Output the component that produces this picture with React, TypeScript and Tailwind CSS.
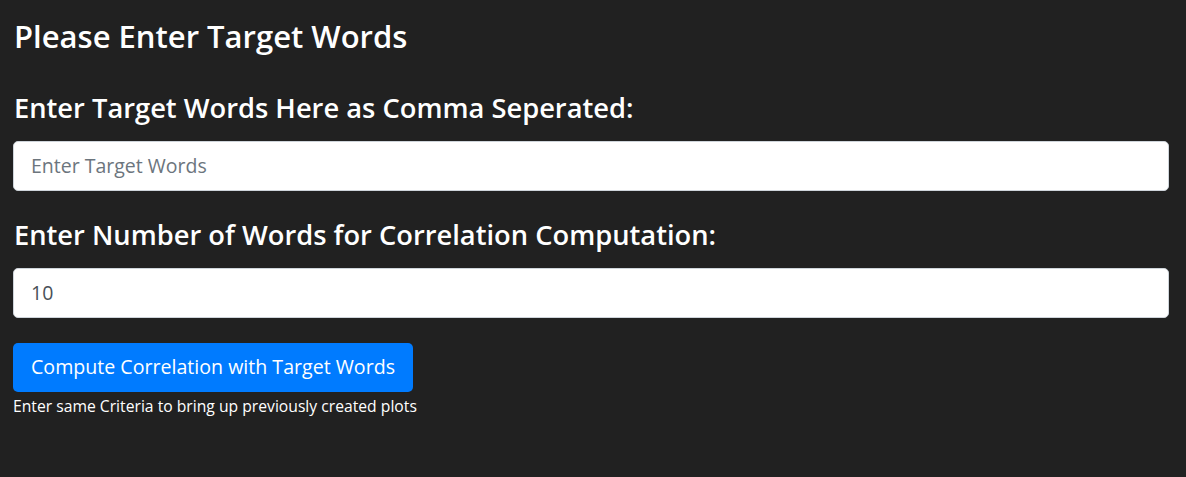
import { useState } from 'react';

const font = { fontFamily: '"Open Sans", "Noto Sans", Arial, sans-serif' };

export default function App() {
  const [targets, setTargets] = useState('');
  const [count, setCount] = useState('10');

  return (
    <div className="min-h-[477px] w-full bg-[#212121] text-white" style={font}>
      <div className="pl-[13px] pr-[17px] pt-[18px]">
        <h2 className="text-[31px] font-semibold leading-[1.2] mb-[37px] pl-px">Please Enter Target Words</h2>

        <h3 className="text-[27.3px] font-semibold leading-[1.2] mb-[16px] pl-px">Enter Target Words Here as Comma Seperated:</h3>
        <input
          type="text"
          value={targets}
          onChange={(e) => setTargets(e.target.value)}
          placeholder="Enter Target Words"
          className="block w-full h-[50px] rounded-[5px] border border-[#ced4da] bg-white px-[17px] text-[19.5px] text-[#495057] placeholder:text-[#6c757d] outline-none"
        />

        <h3 className="text-[27.3px] font-semibold leading-[1.2] mt-[28px] mb-[16px] pl-px">Enter Number of Words for Correlation Computation:</h3>
        <input
          type="text"
          value={count}
          onChange={(e) => setCount(e.target.value)}
          className="block w-full h-[50px] rounded-[5px] border border-[#ced4da] bg-white px-[17px] text-[19.5px] text-[#495057] outline-none"
        />

        {/* Submit */}
        <button className="mt-[25px] h-[49px] px-[18px] rounded-[5px] bg-[#007bff] text-[19.6px] text-white">
          Compute Correlation with Target Words
        </button>
        <p className="text-[15.7px] leading-[1.5] mt-[3px]">Enter same Criteria to bring up previously created plots</p>
      </div>
    </div>
  );
}
